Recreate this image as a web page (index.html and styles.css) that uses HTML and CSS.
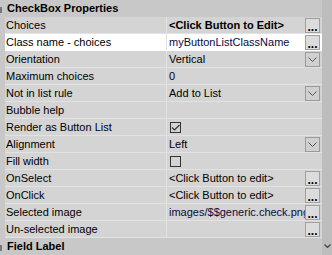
FILE: index.html
```html
<!DOCTYPE html>
<html lang="en">
<head>
  <meta charset="UTF-8">
  <title>CheckBox Properties</title>
  <link rel="stylesheet" href="styles.css">
</head>
<body>

  <div class="grid">
    <div class="props">
      <div class="cat"><span class="glyph"></span>CheckBox Properties</div>

      <div class="row">
        <div class="name">Choices</div>
        <div class="val strong">&lt;Click Button to Edit&gt;</div>
        <span class="ell">...</span>
      </div>
      <div class="row sel">
        <div class="name">Class name - choices</div>
        <div class="val link">myButtonListClassName</div>
        <span class="ell">...</span>
      </div>
      <div class="row">
        <div class="name">Orientation</div>
        <div class="val">Vertical</div>
        <span class="drop"><svg width="9" height="5" viewBox="0 0 9 5"><path d="M0.5 0.5 L4.5 4.5 L8.5 0.5" fill="none" stroke="#555" stroke-width="1"/></svg></span>
      </div>
      <div class="row">
        <div class="name">Maximum choices</div>
        <div class="val">0</div>
      </div>
      <div class="row">
        <div class="name">Not in list rule</div>
        <div class="val">Add to List</div>
        <span class="drop"><svg width="9" height="5" viewBox="0 0 9 5"><path d="M0.5 0.5 L4.5 4.5 L8.5 0.5" fill="none" stroke="#555" stroke-width="1"/></svg></span>
      </div>
      <div class="row">
        <div class="name">Bubble help</div>
        <div class="val"></div>
      </div>
      <div class="row">
        <div class="name">Render as Button List</div>
        <div class="val"><span class="check"><svg width="11" height="11" viewBox="0 0 11 11"><path d="M2 5.5 L4.5 8 L9.5 3" fill="none" stroke="#333" stroke-width="1.2"/></svg></span></div>
      </div>
      <div class="row">
        <div class="name">Alignment</div>
        <div class="val">Left</div>
        <span class="drop"><svg width="9" height="5" viewBox="0 0 9 5"><path d="M0.5 0.5 L4.5 4.5 L8.5 0.5" fill="none" stroke="#555" stroke-width="1"/></svg></span>
      </div>
      <div class="row">
        <div class="name">Fill width</div>
        <div class="val"><span class="check"></span></div>
      </div>
      <div class="row">
        <div class="name">OnSelect</div>
        <div class="val">&lt;Click Button to edit&gt;</div>
        <span class="ell">...</span>
      </div>
      <div class="row">
        <div class="name">OnClick</div>
        <div class="val">&lt;Click Button to edit&gt;</div>
        <span class="ell">...</span>
      </div>
      <div class="row">
        <div class="name">Selected image</div>
        <div class="val link">images/$$generic.check.png</div>
        <span class="ell">...</span>
      </div>
      <div class="row">
        <div class="name">Un-selected image</div>
        <div class="val"></div>
        <span class="ell">...</span>
      </div>

      <div class="cat"><span class="glyph"></span>Field Label</div>
    </div>

    <div class="scroll">
      <svg width="7" height="4" viewBox="0 0 7 4"><path d="M0.5 0.5 L3.5 3.5 L6.5 0.5" fill="none" stroke="#444" stroke-width="1.2"/></svg>
    </div>
  </div>

</body>
</html>
```

FILE: styles.css
```css
body {
  margin: 0;
  font-family: "Liberation Sans", Arial, sans-serif;
  font-size: 11px;
  color: #000;
  background: #c8c8c8;
}

.grid {
  display: flex;
  width: 332px;
  height: 255px;
  overflow: hidden;
}

.props {
  width: 322px;
  flex-shrink: 0;
  background: #c8c8c8;
  padding-left: 5px;
  box-sizing: border-box;
}

.cat {
  height: 17px;
  line-height: 17px;
  font-weight: bold;
  font-size: 11px;
  position: relative;
  margin-left: -5px;
  padding-left: 7px;
  white-space: nowrap;
}

.cat .glyph {
  position: absolute;
  left: 0;
  top: 7px;
  width: 2px;
  height: 6px;
  background: #777;
}

.row {
  display: flex;
  align-items: center;
  height: 16px;
  border-bottom: 1px solid #e2e2e2;
  background: #d4d4d4;
}

.row.sel {
  background: #fff;
  border-bottom-color: #fff;
}

.name {
  width: 160px;
  flex-shrink: 0;
  padding-left: 1px;
  height: 16px;
  line-height: 16px;
  border-right: 1px solid #e2e2e2;
  white-space: nowrap;
  overflow: hidden;
}

.val {
  flex: 1;
  min-width: 0;
  height: 16px;
  line-height: 16px;
  padding-left: 2px;
  white-space: nowrap;
  overflow: hidden;
  display: flex;
  align-items: center;
}

.strong {
  font-weight: bold;
}

.link {
  color: #0a0a3c;
}

.ell, .drop {
  width: 15px;
  height: 15px;
  margin-right: 2px;
  box-sizing: border-box;
  border: 1px solid #a0a0a0;
  background: #dcdcdc;
  display: flex;
  align-items: flex-end;
  justify-content: center;
  font-weight: bold;
  line-height: 10px;
  font-size: 12px;
  flex-shrink: 0;
}

.drop {
  align-items: center;
  background: #d0d0d0;
  border-color: #9a9a9a;
}

.check {
  width: 11px;
  height: 11px;
  border: 1px solid #333;
  box-sizing: border-box;
  display: flex;
  align-items: center;
  justify-content: center;
  margin-left: 1px;
}

.check svg {
  margin: -1px;
}

.scroll {
  width: 10px;
  flex-shrink: 0;
  background: #bdbdbd;
  display: flex;
  flex-direction: column;
  justify-content: flex-end;
  align-items: center;
  padding-bottom: 7px;
  box-sizing: border-box;
}
```
